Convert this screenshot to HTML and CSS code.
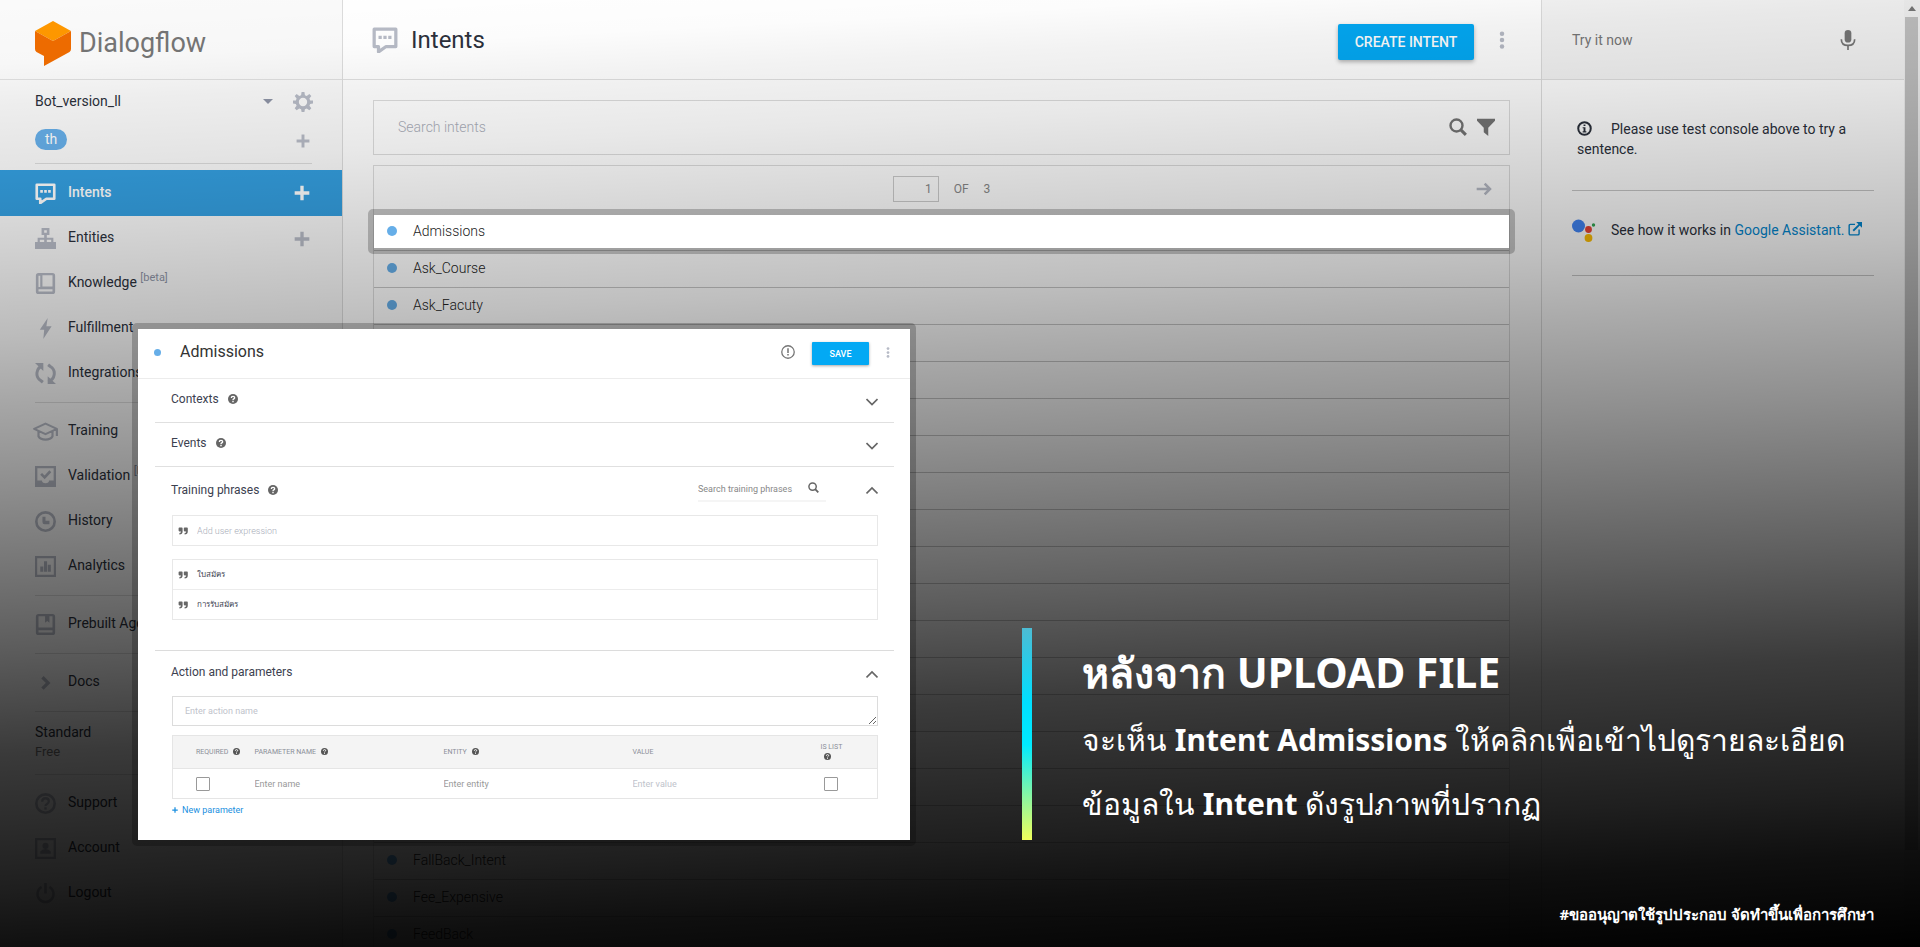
FILE: index.html
```html
<!DOCTYPE html>
<html lang="th">
<head>
<meta charset="utf-8">
<title>Dialogflow – Intents</title>
<link rel="stylesheet" href="styles.css">
</head>
<body>
<svg class="defs" aria-hidden="true">
  <symbol id="i-chat" viewBox="0 0 24 24"><path d="M2 2h20v16H13l-7 5v-5H2z" fill="none" stroke="currentColor" stroke-width="3" stroke-linejoin="round"/><path d="M6 8h3v3H6zM10.500 8h3v3h-3zM15 8h3v3h-3z"/></symbol>
  <symbol id="i-plus" viewBox="0 0 24 24"><path d="M9.500 1h5v8.500H23v5h-8.500V23h-5v-8.500H1v-5h8.500z"/></symbol>
  <symbol id="i-gear" viewBox="0 0 24 24"><path fill-rule="evenodd" d="M10.300 0h3.400l.6 3.800 2.200.9 3.100-2.300 2.400 2.400-2.300 3.100.9 2.200 3.400.2v3.400l-3.400.6-.9 2.200 2.300 3.100-2.400 2.400-3.100-2.300-2.200.9-.6 3.400h-3.400l-.6-3.400-2.200-.9-3.100 2.300L2 19.600l2.300-3.100-.9-2.200L0 13.700v-3.400l3.400-.2.900-2.200L2 4.800l2.400-2.400 3.100 2.300 2.200-.9zM12 7a5 5 0 1 0 0 10 5 5 0 0 0 0-10z"/></symbol>
  <symbol id="i-tree" viewBox="0 0 24 24"><path fill-rule="evenodd" d="M7.500 0h9v8h-3v3H21v5h3v8h-8v-8h2.500v-2.500h-5V16H16v8H8v-8h2.500v-2.500h-5V16H8v8H0v-8h3v-5h7.500V8h-3zM10.500 2.700v2.600h3V2.700z"/></symbol>
  <symbol id="i-book" viewBox="0 0 24 24"><path fill-rule="evenodd" d="M4 0h16q3 0 3 3v18q0 3-3 3H4q-3 0-3-3V3q0-3 3-3zm4.500 2.500v13H20v-13zM4 3v13h2V3zm0 15.500V21h16v-2.500z"/></symbol>
  <symbol id="i-book2" viewBox="0 0 24 24"><path fill-rule="evenodd" d="M4 0h16q3 0 3 3v18q0 3-3 3H4q-3 0-3-3V3q0-3 3-3zm0 2.500v13h16v-13h-3.500V10L14 8l-2.500 2V2.500zm0 16V21h16v-2.500z"/></symbol>
  <symbol id="i-bolt" viewBox="0 0 24 24"><path d="M14.500 0 5.500 13.500h5L9.500 24 19 9.500h-6z"/></symbol>
  <symbol id="i-sync" viewBox="0 0 24 24"><path d="M9 3.200A9.300 9.300 0 0 0 6.500 20l2.500 2M15 21A9.300 9.300 0 0 0 17.500 4L15 2" fill="none" stroke="currentColor" stroke-width="3.400"/><path d="M0 0h9.500v9zM24 24h-9.500v-9z"/></symbol>
  <symbol id="i-cap" viewBox="0 0 30 24"><path d="M15 3 2 9l13 6 13-6zM7 12v5.500c3 5 13 5 16 0V12M28 9v8" fill="none" stroke="currentColor" stroke-width="2.500" stroke-linejoin="round"/></symbol>
  <symbol id="i-valid" viewBox="0 0 24 24"><path fill-rule="evenodd" d="M0 0h24v24H0zM2.700 2.700v14H8q0 3 4 3t4-3h5.300v-14z"/><path d="m7 9 4 4 6.500-7" fill="none" stroke="currentColor" stroke-width="3"/></symbol>
  <symbol id="i-clock" viewBox="0 0 24 24"><circle cx="12" cy="12" r="10.500" fill="none" stroke="currentColor" stroke-width="3"/><path d="M8.500 6.500h3.500V11h4.500v4h-5.500q-2.500 0-2.500-2.500z"/></symbol>
  <symbol id="i-chart" viewBox="0 0 24 24"><path fill-rule="evenodd" d="M0 0h24v24H0zM2.500 2.500v19h19v-19z"/><path d="M6 12h3.500v6H6zM10.300 6h3.500v12h-3.500zM14.600 10h3.500v8h-3.500z"/></symbol>
  <symbol id="i-right" viewBox="0 0 24 24"><path d="m8.500 6 6.500 6.500L8.500 19" fill="none" stroke="currentColor" stroke-width="3.800"/></symbol>
  <symbol id="i-help" viewBox="0 0 24 24"><circle cx="12" cy="12" r="10.500" fill="none" stroke="currentColor" stroke-width="3"/><path d="M8.200 10q0-4 3.800-4t3.800 3.500q0 1.800-2 3t-1.800 2.500" fill="none" stroke="currentColor" stroke-width="2.600"/><path d="M10.600 16.300h2.800V19h-2.800z"/></symbol>
  <symbol id="i-user" viewBox="0 0 24 24"><path fill-rule="evenodd" d="M0 0h24v24H0zM2.700 2.700v18.600h18.600V2.700z"/><circle cx="12" cy="9" r="3.500"/><path d="M6 18v-2.500q2-3 6-3t6 3V18z"/></symbol>
  <symbol id="i-power" viewBox="0 0 24 24"><path d="M7.500 4.500a9.200 9.200 0 1 0 9 0" fill="none" stroke="currentColor" stroke-width="2.800"/><path d="M10.500 0h3v12h-3z"/></symbol>
  <symbol id="i-search" viewBox="0 0 24 24"><circle cx="10" cy="10" r="8" fill="none" stroke="currentColor" stroke-width="3.200"/><path d="m15.500 15.500 7 7" stroke="currentColor" stroke-width="4"/></symbol>
  <symbol id="i-filter" viewBox="0 0 24 24"><path d="M0 1h24v2.500l-9 9.500v11l-6-5v-6L0 3.500z"/></symbol>
  <symbol id="i-arrow" viewBox="0 0 24 24"><path d="M1 12h20M13 4l8 8-8 8" fill="none" stroke="currentColor" stroke-width="3.800"/></symbol>
  <symbol id="i-dots" viewBox="0 0 8 24"><circle cx="4" cy="3.500" r="3"/><circle cx="4" cy="12" r="3"/><circle cx="4" cy="20.500" r="3"/></symbol>
  <symbol id="i-mic" viewBox="0 0 24 24"><rect x="8" y="0" width="8" height="15" rx="4"/><path d="M4 11q0 7.500 8 7.500t8-7.500" fill="none" stroke="currentColor" stroke-width="2"/><path d="M11 18h2v6h-2z"/></symbol>
  <symbol id="i-info" viewBox="0 0 24 24"><circle cx="12" cy="12" r="10" fill="none" stroke="currentColor" stroke-width="3.200"/><path d="M10.500 5.500h3V8h-3zM9 10h4.500v6.500H15v1.700H9v-1.700h1.500v-4.800H9z"/></symbol>
  <symbol id="i-alert" viewBox="0 0 24 24"><circle cx="12" cy="12" r="10.700" fill="none" stroke="currentColor" stroke-width="2.200"/><path d="M10.700 5.500h2.600v8.200h-2.600zM10.700 15.500h2.600V18h-2.600z"/></symbol>
  <symbol id="i-q" viewBox="0 0 24 24"><circle cx="12" cy="12" r="12"/><path d="M8 9.500q0-4 4-4t4 3.300q0 1.700-2 2.900t-2 2.800" fill="none" stroke="#fff" stroke-width="3.200"/><path d="M10.300 16.300h3.400v3.200h-3.400z" fill="#fff"/></symbol>
  <symbol id="i-down" viewBox="0 0 24 24"><path d="m1 6 11 11L23 6" fill="none" stroke="currentColor" stroke-width="3.400"/></symbol>
  <symbol id="i-up" viewBox="0 0 24 24"><path d="m1 17 11-11 11 11" fill="none" stroke="currentColor" stroke-width="3.400"/></symbol>
  <symbol id="i-quote" viewBox="0 0 24 20"><path d="M3 1h6q2 0 2 2v8q0 7-8 7.500V15q4 0 4-4H3q-2 0-2-2V3q0-2 2-2zM16 1h6q2 0 2 2v8q0 7-8 7.500V15q4 0 4-4h-4q-2 0-2-2V3q0-2 2-2z"/></symbol>
  <symbol id="i-ext" viewBox="0 0 24 24"><path d="M12 4H4q-2 0-2 2v14q0 2 2 2h13q2 0 2-2v-7" fill="none" stroke="currentColor" stroke-width="2.400"/><path d="m9 15 11-11" stroke="currentColor" stroke-width="3.200"/><path d="M14 0h10v10z"/></symbol>
</svg>

<div class="scene">
  <div class="app">
    <aside class="sidebar">
      <div class="brand">
        <svg class="brand-mark" viewBox="0 0 36 45"><path fill="#ff9800" d="M18 0 36 10 18 20 0 10z"/><path fill="#ef6c00" d="M0 10l18 10 18-10v18q0 2-1.500 3L9 45V35L1.500 31Q0 30 0 28z"/></svg>
        <span class="brand-name">Dialogflow</span>
      </div>
      <div class="agent">
        <span>Bot_version_ll</span>
        <button class="caret" aria-label="Switch agent"></button>
        <button class="bare gear" aria-label="Settings"><svg class="ic20"><use href="#i-gear"/></svg></button>
      </div>
      <div class="langs">
        <span class="lang">th</span>
        <button class="bare" aria-label="Add language"><svg class="ic14"><use href="#i-plus"/></svg></button>
      </div>
      <hr class="line">
      <nav class="menu">
        <a class="item active" href="#"><svg><use href="#i-chat"/></svg><span>Intents</span><svg class="add"><use href="#i-plus"/></svg></a>
        <a class="item" href="#"><svg><use href="#i-tree"/></svg><span>Entities</span><svg class="add"><use href="#i-plus"/></svg></a>
        <a class="item" href="#"><svg><use href="#i-book"/></svg><span>Knowledge <sup>[beta]</sup></span></a>
        <a class="item" href="#"><svg><use href="#i-bolt"/></svg><span>Fulfillment</span></a>
        <a class="item" href="#"><svg><use href="#i-sync"/></svg><span>Integrations</span></a>
        <hr class="line">
        <a class="item" href="#"><svg class="wide"><use href="#i-cap"/></svg><span>Training</span></a>
        <a class="item" href="#"><svg><use href="#i-valid"/></svg><span>Validation <sup>[beta]</sup></span></a>
        <a class="item" href="#"><svg><use href="#i-clock"/></svg><span>History</span></a>
        <a class="item" href="#"><svg><use href="#i-chart"/></svg><span>Analytics</span></a>
        <hr class="line">
        <a class="item" href="#"><svg><use href="#i-book2"/></svg><span>Prebuilt Agents</span></a>
        <hr class="line">
        <a class="item" href="#"><svg><use href="#i-right"/></svg><span>Docs</span></a>
        <hr class="line">
        <div class="plan"><span>Standard</span><small>Free</small></div>
        <hr class="line">
        <a class="item" href="#"><svg><use href="#i-help"/></svg><span>Support</span></a>
        <a class="item" href="#"><svg><use href="#i-user"/></svg><span>Account</span></a>
        <a class="item" href="#"><svg><use href="#i-power"/></svg><span>Logout</span></a>
      </nav>
    </aside>

    <main class="main">
      <header class="head">
        <svg class="head-icon"><use href="#i-chat"/></svg>
        <h1>Intents</h1>
        <button class="create">CREATE INTENT</button>
        <button class="bare kebab" aria-label="More"><svg><use href="#i-dots"/></svg></button>
      </header>
      <div class="content">
        <div class="search">
          <input type="text" placeholder="Search intents" aria-label="Search intents">
          <svg class="ic18"><use href="#i-search"/></svg>
          <svg class="ic18"><use href="#i-filter"/></svg>
        </div>
        <div class="list">
          <div class="pager">
            <input type="text" value="1" aria-label="Page"><span>OF</span><span>3</span>
            <button class="bare next" aria-label="Next page"><svg class="ic16"><use href="#i-arrow"/></svg></button>
          </div>
          <ul class="rows">
            <li class="spot"><i class="dot"></i>Admissions</li>
            <li><i class="dot"></i>Ask_Course</li>
            <li><i class="dot"></i>Ask_Facuty</li>
            <li></li><li></li><li></li><li></li><li></li><li></li><li></li>
            <li></li><li></li><li></li><li></li><li></li><li></li><li></li>
            <li><i class="dot"></i>FallBack_Intent</li>
            <li><i class="dot"></i>Fee_Expensive</li>
            <li><i class="dot"></i>FeedBack</li>
          </ul>
        </div>
      </div>
    </main>

    <aside class="console">
      <div class="try"><span>Try it now</span><svg class="ic20"><use href="#i-mic"/></svg></div>
      <p class="note"><svg class="ic15"><use href="#i-info"/></svg>Please use test console above to try a sentence.</p>
      <hr>
      <p class="assist">
        <svg class="ga" viewBox="0 0 24 24"><circle cx="6.500" cy="7" r="6.500" fill="#4285f4"/><circle cx="16.500" cy="10.500" r="3.400" fill="#ea4335"/><circle cx="21.500" cy="6" r="1.700" fill="#34a853"/><circle cx="16.500" cy="19" r="3.900" fill="#fbbc05"/></svg>
        <span>See how it works in <a href="#">Google Assistant. <svg class="ic14"><use href="#i-ext"/></svg></a></span>
      </p>
      <hr>
    </aside>
    <div class="scrollbar"><i class="up"></i><div class="thumb"></div></div>
  </div>

  <div class="shade"></div>

  <section class="dialog">
    <header class="dialog-head">
      <i class="dot"></i><h2>Admissions</h2>
      <svg class="ic14"><use href="#i-alert"/></svg>
      <button class="save">SAVE</button>
      <button class="bare kebab" aria-label="More"><svg><use href="#i-dots"/></svg></button>
    </header>
    <div class="dialog-body">
      <div class="sec"><h3>Contexts</h3><svg class="q"><use href="#i-q"/></svg><svg class="chev"><use href="#i-down"/></svg></div>
      <div class="sec"><h3>Events</h3><svg class="q"><use href="#i-q"/></svg><svg class="chev"><use href="#i-down"/></svg></div>
      <div class="sec open">
        <h3>Training phrases</h3><svg class="q"><use href="#i-q"/></svg>
        <label class="find"><input type="text" placeholder="Search training phrases"><svg><use href="#i-search"/></svg></label>
        <svg class="chev"><use href="#i-up"/></svg>
      </div>
      <div class="inner">
        <div class="phrases"><label><svg><use href="#i-quote"/></svg><input type="text" placeholder="Add user expression"></label></div>
        <div class="phrases">
          <div><svg><use href="#i-quote"/></svg><span>ใบสมัคร</span></div>
          <div><svg><use href="#i-quote"/></svg><span>การรับสมัคร</span></div>
        </div>
      </div>
      <div class="sec action"><h3>Action and parameters</h3><svg class="chev"><use href="#i-up"/></svg></div>
      <div class="inner">
        <textarea placeholder="Enter action name" aria-label="Action name"></textarea>
        <table>
          <thead><tr>
            <th class="c1">REQUIRED <svg><use href="#i-q"/></svg></th>
            <th class="c2">PARAMETER NAME <svg><use href="#i-q"/></svg></th>
            <th class="c3">ENTITY <svg><use href="#i-q"/></svg></th>
            <th class="c4">VALUE</th>
            <th class="c5">IS LIST<br><svg><use href="#i-q"/></svg></th>
          </tr></thead>
          <tbody><tr>
            <td class="c1"><input type="checkbox" aria-label="Required"></td>
            <td><input type="text" placeholder="Enter name" aria-label="Parameter name"></td>
            <td><input type="text" placeholder="Enter entity" aria-label="Entity"></td>
            <td><input class="pale" type="text" placeholder="Enter value" aria-label="Value"></td>
            <td class="c5"><input type="checkbox" aria-label="Is list"></td>
          </tr></tbody>
        </table>
        <button class="bare newp"><svg><use href="#i-plus"/></svg>New parameter</button>
      </div>
    </div>
  </section>

  <section class="caption">
    <h2>หลังจาก UPLOAD FILE</h2>
    <p>จะเห็น <b>Intent Admissions</b> ให้คลิกเพื่อเข้าไปดูรายละเอียด</p>
    <p>ข้อมูลใน <b>Intent</b> ดังรูปภาพที่ปรากฏ</p>
  </section>
  <p class="credit">#ขออนุญาตใช้รูปประกอบ จัดทำขึ้นเพื่อการศึกษา</p>
</div>
</body>
</html>
```

FILE: styles.css
```css
* { box-sizing: border-box; }
body { margin: 0; font: 14px/20px Roboto, "Noto Sans", sans-serif; color: #2b303b; }
h1, h2, h3, p, ul { margin: 0; padding: 0; font-weight: 400; }
hr { margin: 0; border: 0; border-top: 1px solid #dcdcdc; }
a { text-decoration: none; }
svg { fill: currentColor; flex: none; }
input, textarea, button { font: inherit; color: inherit; border: 0; background: none; padding: 0; outline: 0; min-width: 0; }
.defs { position: absolute; width: 0; height: 0; }
.bare { display: flex; align-items: center; color: #b7bbc6; }
.ic14 { width: 14px; height: 14px; }
.ic15 { width: 15px; height: 15px; }
.ic16 { width: 16px; height: 16px; }
.ic18 { width: 18px; height: 18px; }
.ic20 { width: 20px; height: 20px; }

.scene { position: relative; height: 100vh; overflow: hidden; background: #000; }
.app { display: flex; min-height: 100%; background: #fff; }

/* sidebar */
.sidebar { flex: 0 0 343px; border-right: 1px solid #dcdcdc; background: #fafafa; }
.brand { display: flex; align-items: center; gap: 8px; height: 80px; padding: 8px 35px 0; border-bottom: 1px solid #e0e0e0; }
.brand-mark { width: 36px; height: 45px; }
.brand-name { padding-bottom: 2px; font-size: 27px; line-height: 32px; color: #757575; }
.agent { display: flex; align-items: center; height: 45px; padding: 0 29px 2px 35px; }
.agent span { padding-bottom: 2px; }
.caret { margin-left: auto; width: 0; height: 0; border: 5px solid transparent; border-top-color: #8e94a6; border-bottom: 0; }
.gear { margin-left: 20px; }
.langs { display: flex; align-items: center; justify-content: space-between; height: 38px; padding: 0 32px 10px 35px; }
.langs .bare { padding-top: 4px; }
.lang { padding: 0 10px; border-radius: 11px; background: #66aee8; color: #fff; line-height: 21px; }
.line { margin: 0 30px 6px 35px; }
.menu .line { margin: 6px 30px 6px 35px; }
.item { display: flex; align-items: center; height: 45px; padding: 0 32px 0 35px; color: #2b303b; }
.item span { margin-left: 12px; padding-bottom: 3px; flex: 1; line-height: 20px; white-space: nowrap; }
.item > svg { width: 21px; height: 21px; color: #b7bbc6; }
.item > svg.wide { width: 27px; margin: 0 -3px; }
.item > svg.add { width: 16px; height: 16px; }
.item.active { height: 46px; background: #349fe0; color: #fff; font-weight: 500; }
.item.active > svg { color: #fff; }
.item sup { font-size: 11px; line-height: 0; color: #8e94a6; }
.plan { padding: 4px 35px 6px; display: flex; flex-direction: column; }
.plan small { font-size: 13px; color: #777; }

/* intents list */
.main { flex: 1; }
.head { display: flex; align-items: center; height: 80px; padding: 0 36px 0 29px; border-bottom: 1px solid #e0e0e0; }
.head-icon { width: 26px; height: 26px; color: #b7bbc6; }
.head h1 { flex: 1; margin-left: 13px; font-size: 24px; line-height: 32px; }
.create { width: 136px; height: 36px; margin-top: 4px; border-radius: 2px; background: #03a9f4; color: #fff; font-weight: 500; box-shadow: 0 2px 4px rgba(0,0,0,.3); }
.kebab svg { width: 6px; height: 18px; }
.head .kebab { margin-left: 25px; }
.content { padding: 20px 31px 0 30px; }
.search { display: flex; align-items: center; gap: 10px; height: 55px; padding: 0 14px 2px 24px; border: 1px solid #dcdcdc; color: #757575; }
.search input { flex: 1; font-weight: 300; }
::placeholder { color: #a9adb8; opacity: 1; }
.list { margin-top: 10px; border: 1px solid #dcdcdc; border-bottom: 0; }
.pager { position: relative; display: flex; align-items: center; justify-content: center; gap: 15px; height: 47px; padding-bottom: 2px; color: #888; font-size: 12px; }
.pager input { width: 46px; height: 26px; padding-right: 6px; border: 1px solid #ccc; text-align: right; }
.next { position: absolute; right: 17px; }
.rows { list-style: none; }
.rows li { display: flex; align-items: center; gap: 16px; height: 37px; padding: 0 13px 2px; border-top: 1px solid #c8c8c8; font-weight: 300; color: #222; }
.dot { width: 10px; height: 10px; border-radius: 50%; background: #66aee8; }
.rows li.spot { position: relative; z-index: 3; height: 33px; margin: 2px 0; border: 0; background: #fff; }
.spot::before, .dialog::before { content: ""; position: absolute; inset: -6px; border: 6px solid rgba(0,0,0,.22); border-radius: 5px; pointer-events: none; }

/* test console */
.console { flex: 0 0 363px; border-left: 1px solid #dcdcdc; }
.try { display: flex; align-items: center; justify-content: space-between; height: 80px; padding: 0 46px 0 30px; border-bottom: 1px solid #e0e0e0; background: #f5f5f5; color: #777; }
.note { padding: 39px 40px 0 35px; height: 110px; }
.note svg { margin-right: 19px; vertical-align: -2px; }
.console hr { margin: 0 30px; border-color: #c8c8c8; }
.assist { display: flex; align-items: center; gap: 15px; height: 84px; padding: 0 30px 4px; }
.assist span { padding-bottom: 2px; }
.assist a { color: #0288d1; }
.assist a svg { vertical-align: -1px; }
.ga { width: 24px; height: 24px; }
.scrollbar { flex: 0 0 16px; padding: 0 2px 0 1px; background: #f1f1f1; }
.up { display: block; margin: 6px auto; border: 4px solid transparent; border-top: 0; border-bottom: 5px solid #777; width: 0; }
.thumb { height: 833px; background: #c1c1c1; }

.shade { position: absolute; inset: 0; z-index: 2; background: linear-gradient(177deg, rgba(0,0,0,0) 0, rgba(0,0,0,.01) 6%, rgba(0,0,0,.05) 10%, rgba(0,0,0,.09) 16%, rgba(0,0,0,.17) 24%, rgba(0,0,0,.25) 32%, rgba(0,0,0,.33) 38%, rgba(0,0,0,.44) 47%, rgba(0,0,0,.63) 62%, rgba(0,0,0,.77) 72%, rgba(0,0,0,.88) 85%, rgba(0,0,0,.94) 91%, #000 100%); }

/* intent editor */
.dialog { position: absolute; z-index: 4; left: 138px; top: 329px; width: 772px; padding-bottom: 24px; background: #fff; color: #3c4150; }
.dialog-head { display: flex; align-items: center; height: 50px; padding: 0 20px 3px 16px; border-bottom: 1px solid #ececec; color: #757575; }
.dialog-head .dot { width: 7px; height: 7px; }
.dialog-head h2 { flex: 1; margin-left: 19px; font-size: 16px; color: #333; }
.save { width: 57px; height: 23px; margin: 3px 0 0 17px; border-radius: 1px; background: #03a9f4; color: #fff; font-size: 9px; line-height: 12px; font-weight: 500; box-shadow: 0 1px 3px rgba(0,0,0,.35); }
.dialog-head .kebab { margin-left: 17px; }
.dialog-head .kebab svg { width: 4px; height: 11px; }
.dialog-body { padding: 0 16px 0 17px; font-size: 9px; line-height: 12px; }
.sec { display: flex; align-items: center; height: 44px; padding: 0 16px 4px; border-bottom: 1px solid #e0e0e0; }
.sec h3 { font-size: 12px; line-height: 16px; }
.q { width: 10px; height: 10px; margin-left: 9px; color: #666; }
.chev { width: 12px; height: 12px; margin: 6px 0 0 auto; color: #666; }
.sec.open { height: 47px; padding-bottom: 1px; border: 0; }
.find { display: flex; align-items: center; width: 128px; height: 23px; margin-left: auto; border-bottom: 2px solid #f5f5f5; color: #666; }
.find input { width: 110px; }
.find ::placeholder { color: #888; }
.find svg { width: 11px; height: 11px; margin-bottom: 4px; }
.sec.open .chev { margin: 2px 0 0 40px; }
.inner { padding: 0 16px 0 17px; }
.phrases { margin: 1px 0 13px; border: 1px solid #e8e8e8; }
.phrases > * { display: flex; align-items: center; gap: 9px; height: 29px; padding-left: 5px; }
.phrases > * + * { height: 30px; border-top: 1px solid #ececec; }
.phrases svg { width: 10px; height: 8px; color: #666; }
.phrases span { font-size: 8px; }
.phrases input { flex: 1; font-weight: 300; }
.sec.action { margin-top: 30px; height: 46px; padding-bottom: 4px; border: 0; border-top: 1px solid #dcdcdc; }
textarea { display: block; width: 100%; height: 30px; padding: 8px 12px; border: 1px solid #dcdcdc; resize: vertical; overflow: hidden; }
textarea::placeholder { color: #c0c3cb; }
table { width: 100%; margin-top: 9px; table-layout: fixed; border-collapse: collapse; border: 1px solid #e5e5e5; }
th { height: 33px; padding: 0; background: #f4f4f4; color: #8b8e98; font-size: 7px; line-height: 10px; font-weight: 400; text-align: left; }
th svg { width: 7px; height: 7px; margin-left: 3px; vertical-align: -1px; color: #555; }
td { height: 30px; padding: 0; border-top: 1px solid #e5e5e5; }
td input { display: block; }
td input::placeholder { color: #999; }
td .pale::placeholder { color: #c0c3cb; }
.c1 { width: 82px; padding-left: 23px; }
.c2, .c3 { width: 189px; }
.c4 { width: 188px; }
td.c5 { padding-left: 3px; }
input[type=checkbox] { appearance: none; width: 14px; height: 14px; margin: 0; border: 1px solid #999; border-radius: 1px; background: #fff; }
.newp { margin-top: 5px; gap: 4px; color: #1a8fe0; }
.newp svg { width: 6px; height: 6px; }

/* slide caption */
.caption { position: absolute; z-index: 4; left: 1022px; top: 628px; height: 212px; padding: 8px 0 0 60px; color: #fff; font-family: "Noto Sans", "Open Sans", sans-serif; white-space: nowrap; }
.caption::before { content: ""; position: absolute; left: 0; top: 0; bottom: 0; width: 10px; background: linear-gradient(#4dbbd3, #00dfff 35%, #00eaff 55%, #8cf6a0 80%, #f0ff5c); }
.caption h2 { font-size: 41px; line-height: 72px; font-weight: 700; }
.caption p { font-size: 30px; line-height: 64px; }
.credit { position: absolute; z-index: 4; right: 46px; bottom: 21px; color: #fff; font: 700 15px/24px "Noto Sans", sans-serif; }
```
